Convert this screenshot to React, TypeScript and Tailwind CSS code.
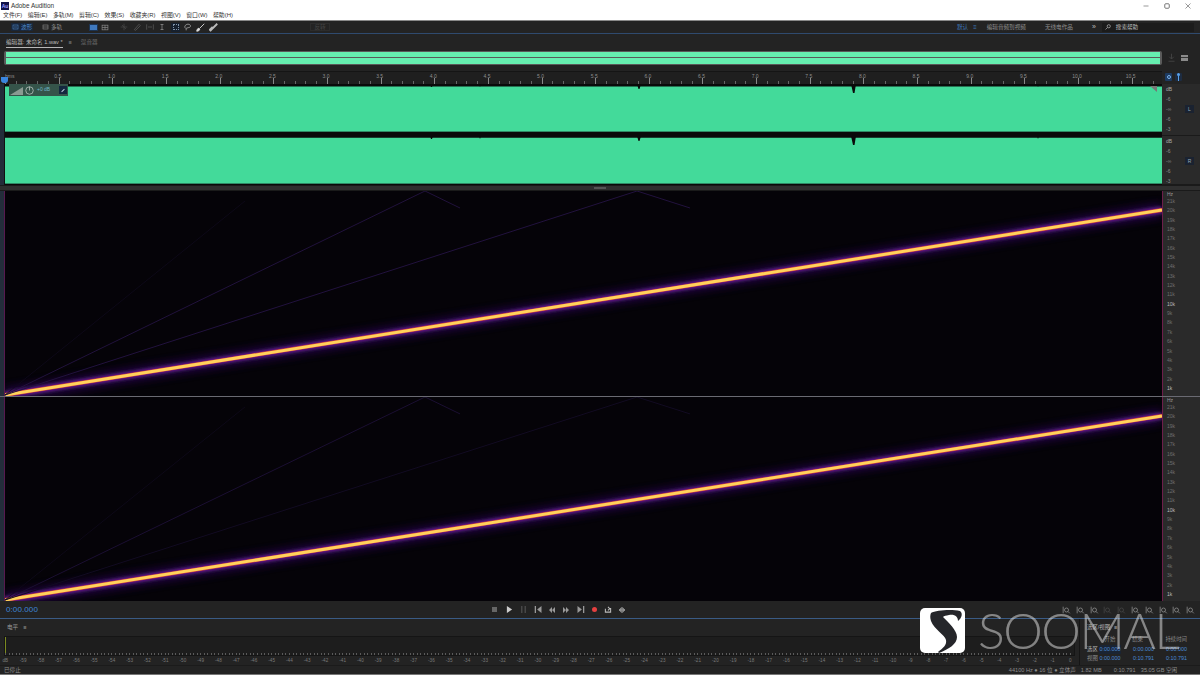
import type { ReactNode } from 'react';

const CJK = "font-['Liberation_Sans','Noto_Sans_CJK_SC',sans-serif]";

const MENUS = ['文件(F)', '编辑(E)', '多轨(M)', '剪辑(C)', '效果(S)', '收藏夹(R)', '视图(V)', '窗口(W)', '帮助(H)'];
const RULER = ['0.5', '1.0', '1.5', '2.0', '2.5', '3.0', '3.5', '4.0', '4.5', '5.0', '5.5', '6.0', '6.5', '7.0', '7.5', '8.0', '8.5', '9.0', '9.5', '10.0', '10.5'];
const HZ = ['21k', '20k', '19k', '18k', '17k', '16k', '15k', '14k', '13k', '12k', '11k', '10k', '9k', '8k', '7k', '6k', '5k', '4k', '3k', '2k', '1k'];
const LEVELS = ['dB', ...Array.from({ length: 59 }, (_, i) => String(i - 59)), '0'];

function Ico({ w = 9, h = 9, vb = '0 0 12 12', children, className = '' }: { w?: number; h?: number; vb?: string; children: ReactNode; className?: string }) {
    return (
        <svg width={w} height={h} viewBox={vb} fill="none" stroke="currentColor" strokeWidth={1.2} className={`shrink-0 ${className}`}>
            {children}
        </svg>
    );
}

function TitleBar() {
    return (
        <div className="h-[11px] flex items-center bg-white shrink-0">
            <div className="ml-[1px] w-[8px] h-[8px] bg-[#10114a] text-[#9c9cff] text-[5px] font-bold leading-[8px] text-center">Au</div>
            <span className="ml-[2px] text-[6.4px] text-[#333]">Adobe Audition</span>
            <div className="ml-auto flex items-center text-[#555]">
                <Ico w={6} h={6}><path d="M1 6h10" /></Ico>
                <Ico w={6} h={6} className="ml-[15px]"><rect x="1.5" y="1.5" width="9" height="9" rx="2" strokeWidth={1.6} /></Ico>
                <Ico w={6} h={6} className="ml-[15px] mr-[9px]"><path d="M1 1l10 10M11 1L1 11" /></Ico>
            </div>
        </div>
    );
}

function MenuBar() {
    return (
        <div className="h-[9px] flex items-center gap-[5.5px] pl-[3px] bg-white text-[5.9px] text-[#333] shrink-0">
            {MENUS.map((m) => <span key={m}>{m}</span>)}
        </div>
    );
}

function Toolbar() {
    return (
        <div className="h-[12px] flex items-center bg-[#232323] border-t border-[#8a8a8a] border-b border-b-[#2f4a6e] text-[5.6px] text-[#8d8d8d] shrink-0 box-content">
            <div className="ml-[11px] w-[22px] h-[8px] flex items-center justify-center gap-[2px] bg-[#18263a] text-[#4d86c8]">
                <Ico w={7} h={6}><rect x="1" y="2" width="10" height="8" /><path d="M3 6h6" /></Ico>波形
            </div>
            <div className="ml-[8px] w-[22px] flex items-center justify-center gap-[2px]">
                <Ico w={7} h={6}><rect x="1" y="2" width="10" height="8" /><path d="M1 6h10" /></Ico>多轨
            </div>
            <div className="ml-[26px] w-[9px] h-[7px] bg-[#3f78bd] border border-[#1b3352]" />
            <Ico w={8} h={7} className="ml-[3px] text-[#8a8a8a]"><rect x="1" y="2" width="10" height="8" /><path d="M1 6h10M6 2v8" /></Ico>
            <Ico w={8} h={8} className="ml-[11px] text-[#444]"><path d="M6 1v10M1 6h10M3 3l6 6" /></Ico>
            <Ico w={8} h={8} className="ml-[5px] text-[#555]"><path d="M2 10l7-8 2 2-7 7z" /></Ico>
            <Ico w={10} h={8} className="ml-[4px] text-[#555]"><path d="M1 2v8M11 2v8M3 6h6" /></Ico>
            <Ico w={6} h={8} className="ml-[4px] text-[#aaa]"><path d="M6 1v10M3 1h6M3 11h6" /></Ico>
            <div className="ml-[6px] w-[9px] h-[9px] bg-[#16202e] flex items-center justify-center">
                <div className="w-[6px] h-[6px] border border-dotted border-[#7f93a8]" />
            </div>
            <Ico w={9} h={8} className="ml-[3px] text-[#aaa]"><path d="M3 8C0 5 4 1 8 2s3 5-1 5l-3 1 0 3" /></Ico>
            <Ico w={9} h={9} className="ml-[4px] text-[#ddd]"><path d="M11 1L5 7M1 11c2 0 4-1 4-3L4 7c-2 0-3 2-3 4z" fill="currentColor" /></Ico>
            <Ico w={9} h={9} className="ml-[4px] text-[#bbb]"><path d="M11 1L5 7M2 10l3-3-1-1-3 3z" strokeWidth={2.4} /></Ico>
            <div className="ml-[92px] w-[20px] h-[8px] border border-[#2c2c2c] text-center leading-[7px] text-[#444]">反转</div>
            <div className="ml-[627px] text-[#3d78bb]">默认</div>
            <div className="ml-[5px] text-[#3d78bb] text-[6px]">≡</div>
            <div className="ml-[10px] text-[#8d8d8d]">编辑音频到视频</div>
            <div className="ml-[19px] text-[#8d8d8d]">无线电作品</div>
            <div className="ml-[19px] text-[#bbb] text-[7px]">»</div>
            <div className="ml-[6px] w-[92px] h-[9px] flex items-center bg-[#1b1b1b] text-[#bbb]">
                <Ico w={6} h={6} className="ml-[3px] text-[#ccc]"><circle cx="7.5" cy="4.5" r="3.2" /><path d="M5 7l-4 4" /></Ico>
                <span className="ml-[5px]">搜索帮助</span>
            </div>
        </div>
    );
}

function TabRow() {
    return (
        <div className="h-[16px] flex items-center pl-[6px] text-[5.6px] shrink-0 bg-[#232323]">
            <span className="text-[#b8b8b8] border-b border-[#b8b8b8] pb-[1px] pt-[2px]">编辑器: 未命名 1.wav *</span>
            <span className="ml-[6px] text-[#888]">≡</span>
            <span className="ml-[9px] text-[#6b6b6b]">混音器</span>
        </div>
    );
}

function Overview() {
    return (
        <div className="h-[15px] flex items-center pl-[4px] shrink-0 bg-[#232323]">
            <div className="w-[1158px] h-[14px] flex flex-col gap-[1px] py-[1px] px-[2px] bg-[#5a5a5a] rounded-[2px]">
                <div className="flex-1 bg-[#66efb0]" />
                <div className="flex-1 bg-[#66efb0]" />
            </div>
            <Ico w={9} h={9} className="ml-[5px] text-[#444]"><path d="M6 1v7M3 5l3 3 3-3M2 11h8" /></Ico>
            <div className="ml-[5px] w-[7px] h-[6px] bg-[#8a8a8a] border-y border-[#8a8a8a] flex items-center"><div className="w-full h-[1px] bg-[#333]" /></div>
        </div>
    );
}

function Ruler() {
    return (
        <div className="h-[13px] mt-[6px] flex shrink-0 bg-[#232323] relative">
            <div className="w-[1158px] h-full ml-[4px] border-t border-[#151515] relative flex items-start text-[5px] text-[#8d8d8d] overflow-hidden bg-[#1f1f1f]">
                <span className="absolute left-[1px] top-[1px]">hms</span>
                <div className="flex pl-[27px] pt-[1px]">
                    {RULER.map((t) => <span key={t} className="w-[53.65px] shrink-0 text-center">{t}</span>)}
                </div>
                <div className="absolute left-[0.5px] right-0 bottom-0 h-[3px] bg-[repeating-linear-gradient(90deg,#666_0,#666_1px,transparent_1px,transparent_10.73px)]" />
                <div className="absolute left-[0.5px] right-0 bottom-0 h-[6px] bg-[repeating-linear-gradient(90deg,#888_0,#888_1px,transparent_1px,transparent_53.65px)]" />
            </div>
            <div className="ml-[3px] mt-[1px] flex items-center gap-[3px] h-[9px]">
                <div className="w-[7px] h-[8px] bg-[#1d3a60] rounded-[1px] flex items-center justify-center"><div className="w-[4px] h-[4px] rounded-full border border-[#7db3ea]" /></div>
                <div className="w-[7px] h-[8px] bg-[#1d2c42] rounded-[1px] flex flex-col items-center"><div className="w-[3px] h-[3px] bg-[#58a0ea] rounded-full" /><div className="w-[1px] h-[5px] bg-[#58a0ea]" /></div>
            </div>
            <div className="absolute left-[1px] top-[6px] w-[7px] h-[6px] bg-[#3a86df] rounded-b-[3px]" />
        </div>
    );
}

function Track({ label, first }: { label: string; first?: boolean }) {
    return (
        <div className={`${first ? 'h-[52px]' : 'h-[49px]'} flex shrink-0`}>
            <div className="w-[4px] bg-[#232d3a]" />
            <div className="w-[1px] bg-[#111]" />
            <div className="w-[1157px] flex flex-col">
                <svg viewBox="0 0 1157 48" preserveAspectRatio="none" className="w-full h-[48px] bg-[#43da9a] block shrink-0">
                    <path d={first ? 'M0 0H1157V2.6H0Z' : 'M0 0H1157V1.8H0Z'} fill="#0a0a0a" />
                    <path d="M846 0h5l-1.5 9h-1.5zM632 0h4l-1.5 5h-1zM425 0h3l-1 3h-1zM474 0h2l-1 3zM1032 0h2l-1 3z" fill="#0a0a0a" />
                    <path d="M0 47.5H1157" stroke="#2f8a66" strokeWidth={1} />
                </svg>
                <div className={`${first ? 'h-[4px]' : 'h-[1px]'} bg-[#0a0a0a]`} />
            </div>
            <div className="w-[38px] relative bg-[#2a2a2a] flex flex-col pl-[4px] text-[5px] text-[#8d8d8d] leading-[10px] border-b border-[#1a1a1a]">
                <span className="text-[#aaa]">dB</span><span>-6</span><span>-∞</span><span>-6</span><span>-3</span>
                <div className="absolute right-[6px] top-[21px] w-[9px] h-[8px] bg-[#1a2230] text-[#9ab] text-center leading-[8px]">{label}</div>
            </div>
        </div>
    );
}

function Spectrogram({ id, tall }: { id: string; tall?: boolean }) {
    return (
        <div className={`${tall ? 'h-[205px]' : 'h-[204px]'} flex shrink-0`}>
            <div className="w-[4px] bg-[#232d3a]" />
            <div className="w-[1px] bg-[#57194f]" />
            <svg viewBox="0 0 1157 205" preserveAspectRatio="none" className="w-[1157px] h-full block bg-[#050308]">
                <defs>
                    <filter id={id} x="-5%" y="-50%" width="110%" height="200%"><feGaussianBlur stdDeviation="5" /></filter>
                    <filter id={`${id}s`} x="-5%" y="-50%" width="110%" height="200%"><feGaussianBlur stdDeviation="1.6" /></filter>
                </defs>
                <path d="M0 204L1157 19" stroke="#2e0a5e" strokeWidth={12} filter={`url(#${id})`} opacity={0.8} />
                <path d="M0 204L1157 19" stroke="#6b1790" strokeWidth={6.5} filter={`url(#${id}s)`} />
                <path d="M0 204L1157 19" stroke="#d8402a" strokeWidth={3.8} />
                <path d="M0 204L1157 19" stroke="#ffd25c" strokeWidth={3} />
                <path d="M0 204L420 0L455 17" fill="none" stroke={tall ? '#21123c' : '#1b0f32'} strokeWidth={1} />
                <path d="M0 204L632 0L685 17" fill="none" stroke={tall ? '#22123e' : '#120b22'} strokeWidth={1} />
                <path d="M0 204L240 10" fill="none" stroke="#0f0a1c" strokeWidth={0.8} />
            </svg>
            <div className="w-[1px] bg-[#6d1e4a]" />
            <div className="w-[37px] bg-[#2a2a2a] pl-[4px] text-[5px] leading-[9.35px] text-[#6f6f6f] flex flex-col">
                <span className="text-[#999] h-[6px] leading-[6px]">Hz</span>
                {HZ.map((h) => <span key={h} className={h === '10k' || h === '1k' ? 'text-[#bbb]' : ''}>{h}</span>)}
            </div>
        </div>
    );
}

function Transport() {
    return (
        <div className="h-[17px] flex items-center shrink-0 bg-[#232323] border-b border-[#3a5b85] box-content">
            <span className="ml-[6px] w-[485px] text-[8px] text-[#3e86d8] tracking-[0.1px] font-['Liberation_Sans',sans-serif]">0:00.000</span>
            <div className="w-[7px] h-[5px] flex justify-center"><div className="w-[5px] h-[5px] bg-[#666]" /></div>
            <Ico w={7} h={7} vb="0 0 8 8" className="ml-[8px] text-[#ccc]"><path d="M1 0l6 4-6 4z" fill="currentColor" stroke="none" /></Ico>
            <Ico w={7} h={7} vb="0 0 8 8" className="ml-[7px] text-[#4a4a4a]"><path d="M2 0v8M6 0v8" strokeWidth={1.6} /></Ico>
            <Ico w={8} h={7} vb="0 0 8 8" className="ml-[7px] text-[#999]"><path d="M1 0v8" strokeWidth={1.5} /><path d="M8 0L3 4l5 4z" fill="currentColor" stroke="none" /></Ico>
            <Ico w={8} h={6} vb="0 0 8 8" className="ml-[6px] text-[#999]"><path d="M4 0L0 4l4 4zM8 0L4 4l4 4z" fill="currentColor" stroke="none" /></Ico>
            <Ico w={8} h={6} vb="0 0 8 8" className="ml-[6px] text-[#999]"><path d="M0 0l4 4-4 4zM4 0l4 4-4 4z" fill="currentColor" stroke="none" /></Ico>
            <Ico w={8} h={7} vb="0 0 8 8" className="ml-[7px] text-[#999]"><path d="M7 0v8" strokeWidth={1.5} /><path d="M0 0l5 4-5 4z" fill="currentColor" stroke="none" /></Ico>
            <div className="ml-[7px] w-[5px] h-[5px] rounded-full bg-[#e54040]" />
            <Ico w={8} h={7} vb="0 0 8 8" className="ml-[7px] text-[#bbb]"><path d="M1 3v4h6V3H5M4 1l2 2-2 2" /></Ico>
            <Ico w={8} h={6} vb="0 0 8 8" className="ml-[6px] text-[#999]"><path d="M0 4l2-2v4zM8 4L6 2v4zM2 4h4" /><path d="M3 1h2v6H3z" /></Ico>
            <div className="ml-[436px] flex items-center gap-[4.8px] text-[#8c8c8c]">
                {[0, 1, 2, 3, 4, 5, 6, 7, 8, 9].map((i) => (
                    <Ico key={i} w={9} h={8} className={i === 3 || i === 4 ? 'text-[#454545]' : ''}>
                        <circle cx="6" cy="6" r="3" /><path d="M8 8l3 3M1 1v10" />
                    </Ico>
                ))}
            </div>
        </div>
    );
}

function Meter() {
    return (
        <div className="h-[46px] flex shrink-0 bg-[#232323] border-b border-[#1b1b1b] box-content">
            <div className="w-[1079px] flex flex-col">
                <div className="h-[17px] flex items-center pl-[7px] text-[5.6px] text-[#999]">
                    电平<span className="ml-[5px]">≡</span>
                </div>
                <div className="ml-[4px] w-[1071px] h-[20px] bg-[#1d1d1d] border border-[#151515] relative">
                    <div className="absolute left-0 top-0 w-[1px] h-[17px] bg-[#7b8a20]" />
                    <div className="absolute inset-x-0 bottom-0 h-[2px] bg-[repeating-linear-gradient(90deg,#5a5a5a_0,#5a5a5a_1px,transparent_1px,transparent_3.55px)]" />
                </div>
                <div className="flex h-[9px] text-[4.6px] leading-[9px] text-[#7a7a7a] -ml-[3.5px]">
                    {LEVELS.map((l, i) => <span key={i} className="w-[17.75px] shrink-0 text-center">{l}</span>)}
                </div>
            </div>
            <div className="w-[121px] border-l border-[#151515] pl-[7px] text-[5.4px] text-[#8d8d8d]">
                <div className="h-[16px] pt-[4px] text-[#b5b5b5]">选区/视图<span className="ml-[4px]">≡</span></div>
                <div className="grid grid-cols-[12px_22px_33px_33px] leading-[9.6px] text-right">
                    <span /><span className="text-center">开始</span><span className="pr-[11px]">结束</span><span>持续时间</span>
                    <span className="text-left text-[#b5b5b5]">选区</span><span className="text-center text-[#4a8ad8] bg-[#1a2433]">0:00.000</span><span className="text-[#4a8ad8]">0:00.000</span><span className="text-[#4a8ad8]">0:00.000</span>
                    <span className="text-left">视图</span><span className="text-center text-[#4a8ad8]">0:00.000</span><span className="text-[#4a8ad8]">0:10.791</span><span className="text-[#4a8ad8]">0:10.791</span>
                </div>
            </div>
        </div>
    );
}

function StatusBar() {
    return (
        <div className="h-[8px] flex items-center pl-[4px] bg-[#232323] text-[5.6px] text-[#8d8d8d] shrink-0 border-b border-[#777] box-content">
            已停止
            <span className="ml-[988px] w-[72px]">44100 Hz ● 16 位 ● 立体声</span>
            <span className="w-[33px]">1.82 MB</span>
            <span className="w-[27px]">0:10.791</span>
            <span>35.05 GB 空闲</span>
        </div>
    );
}

export default function App() {
    return (
        <div className={`w-[1200px] h-[675px] overflow-hidden relative flex flex-col bg-[#232323] ${CJK}`}>
            <TitleBar />
            <MenuBar />
            <Toolbar />
            <TabRow />
            <Overview />
            <Ruler />
            <Track label="L" first />
            <Track label="R" />
            <div className="h-[6px] bg-[#2f2f2f] border-y border-[#1a1a1a] flex justify-center shrink-0">
                <div className="mt-[1px] w-[12px] h-[2px] bg-[#555]" />
            </div>
            <Spectrogram id="a" tall />
            <div className="h-[1px] bg-[#6a6a72] shrink-0" />
            <Spectrogram id="b" />
            <Transport />
            <Meter />
            <StatusBar />

            {/* HUD on top of the waveform */}
            <div className="absolute left-[9px] top-[84px] w-[59px] h-[12px] flex items-center bg-[#35544a] text-[5px] text-[#6fb4c8]">
                <svg width="13" height="9" viewBox="0 0 13 9" className="ml-[1px]"><path d="M0 9L13 1V9Z" fill="#8a9a92" /></svg>
                <svg width="9" height="9" viewBox="0 0 12 12" fill="none" stroke="#c0c8c4" className="ml-[2px]"><circle cx="6" cy="6" r="5" /><path d="M6 1v5" /></svg>
                <span className="ml-[3px]">+0 dB</span>
                <div className="ml-auto mr-[1px] w-[8px] h-[8px] bg-[#14283f] flex items-center justify-center"><div className="w-[4px] h-[1px] bg-[#bcd] -rotate-45" /></div>
            </div>
            <svg width="7" height="6" viewBox="0 0 7 6" className="absolute left-[1150px] top-[86px]"><path d="M0 0H7V6Z" fill="#777" /></svg>

            {/* Soomal watermark */}
            <div className="absolute left-[920px] top-[608px] flex items-center">
                <div className="w-[45px] h-[45px] rounded-[5px] bg-white shrink-0">
                    <svg viewBox="0 0 45 45" className="w-full h-full">
                        <path d="M11 5C16 2 32 1 40 3C43 5 42 10 38 13C38 9 35 6 29 7C26 7.500 24 8 23 9C28 14 37 22 37 29C37 36 29 41 19 45L18 44C23 40 27 37 26 32C25 27 14 21 11 13C10 10 10 7 11 5Z" fill="#25262a" />
                    </svg>
                </div>
                <span className="ml-[13px] font-['Lato','Open_Sans',sans-serif] font-light text-[50px] leading-[45px] tracking-[-1.5px] text-white/45 whitespace-nowrap">SOOMAL</span>
            </div>
        </div>
    );
}
